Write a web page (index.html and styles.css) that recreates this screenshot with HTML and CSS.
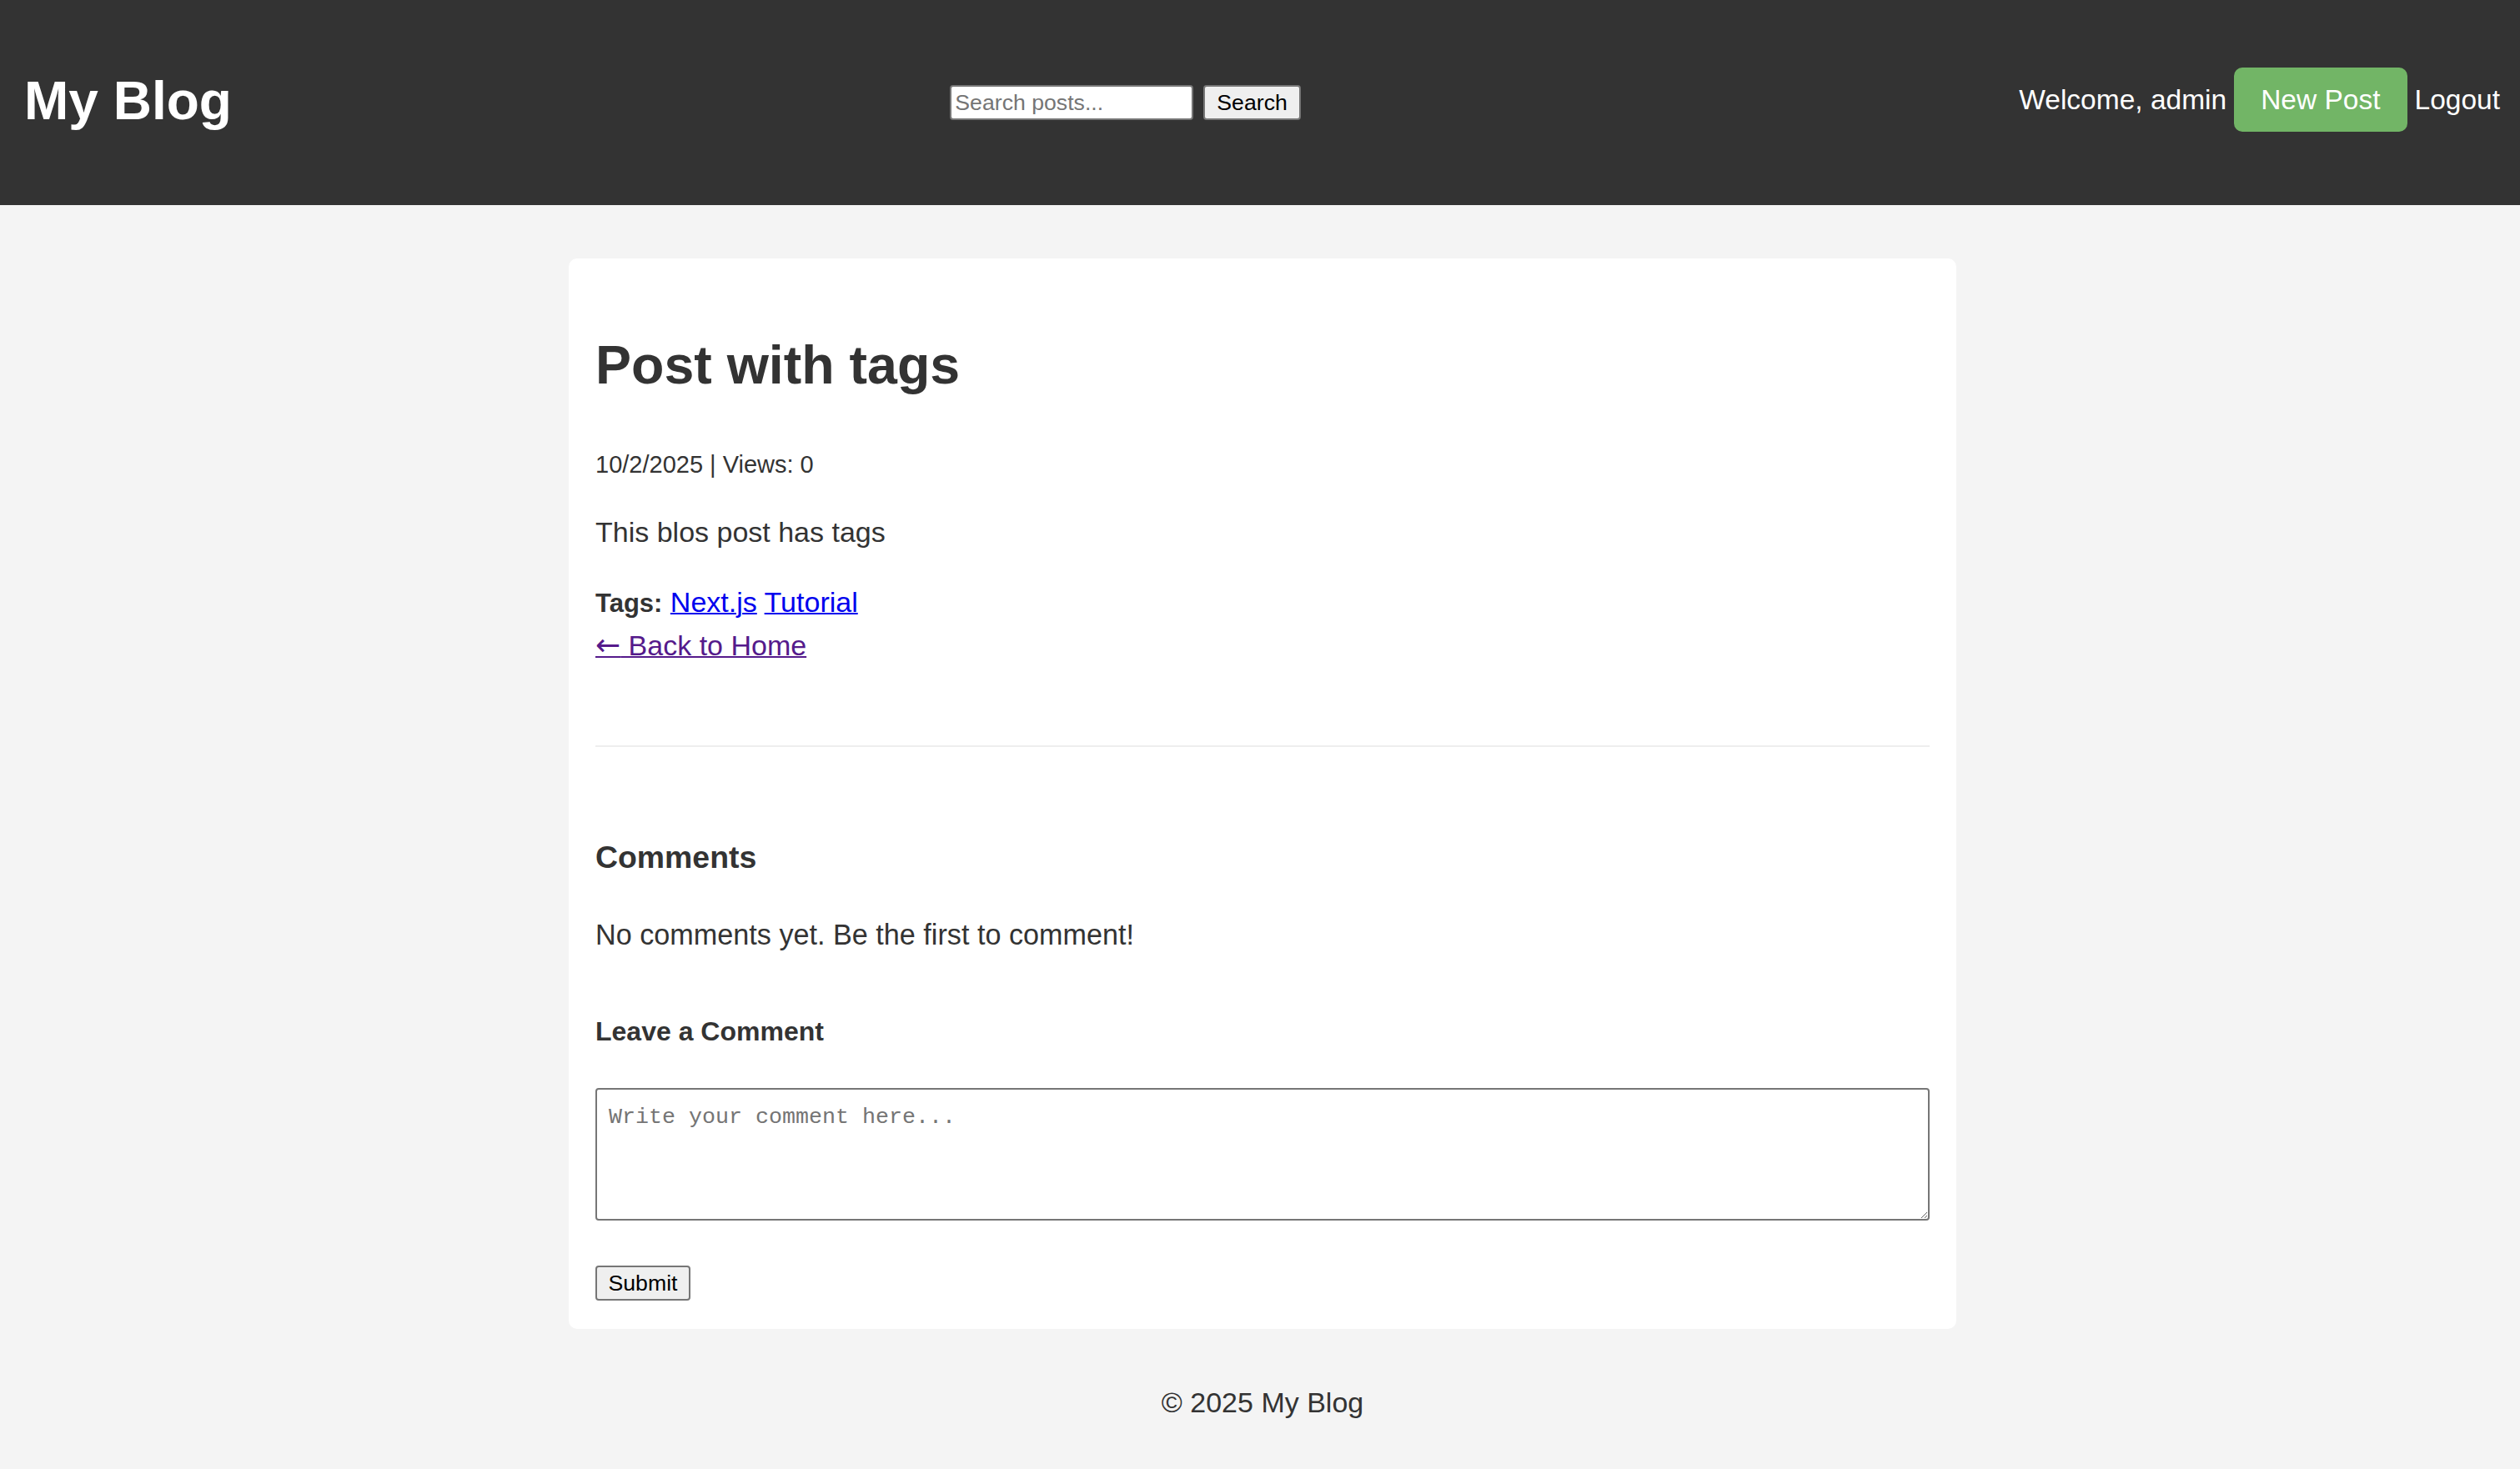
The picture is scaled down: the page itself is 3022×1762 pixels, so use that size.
FILE: index.html
```html
<!DOCTYPE html>
<html lang="en">
<head>
<meta charset="utf-8">
<title>Post with tags - My Blog</title>
<link rel="stylesheet" href="styles.css">
</head>
<body>
<header class="site-header">
  <h1 class="logo">My Blog</h1>
  <form class="search">
    <input class="search-input" type="text" placeholder="Search posts...">
    <button class="native-btn" type="button">Search</button>
  </form>
  <nav class="user-nav">
    <span class="welcome">Welcome, admin</span>
    <a class="new-post" href="#">New Post</a>
    <a class="logout" href="#">Logout</a>
  </nav>
</header>
<main class="page">
  <article class="card">
    <h1 class="post-title">Post with tags</h1>
    <p class="meta">10/2/2025 | Views: 0</p>
    <p class="content">This blos post has tags</p>
    <div class="tags"><strong class="tags-label">Tags:</strong> <a class="tag-link" href="#">Next.js</a> <a class="tag-link" href="#">Tutorial</a></div>
    <p class="back-row"><a class="back-link" href="#"><span class="arrow">←</span> Back to Home</a></p>
    <section class="comments">
      <h3 class="comments-title">Comments</h3>
      <p class="empty">No comments yet. Be the first to comment!</p>
      <h4 class="leave-title">Leave a Comment</h4>
      <form class="comment-form">
        <textarea class="comment-input" placeholder="Write your comment here..."></textarea>
        <button class="native-btn submit-btn" type="button">Submit</button>
      </form>
    </section>
  </article>
  <footer class="footer">© 2025 My Blog</footer>
</main>
</body>
</html>
```
FILE: styles.css
```css
html, body {
  margin: 0;
  padding: 0;
}

body {
  background: #f4f4f4;
  color: #333;
  font-family: "Liberation Sans", Arial, Helvetica, sans-serif;
}

/* Header */
.site-header {
  height: 246px;
  box-sizing: border-box;
  background: #333;
  color: #fff;
  display: flex;
  align-items: center;
  justify-content: space-between;
  padding: 0 24px 0 29px;
}

.logo {
  margin: -5px 0 0;
  font-size: 64px;
  line-height: 74px;
  font-weight: bold;
}

.search {
  display: flex;
  align-items: center;
  gap: 12px;
  margin: 0;
}

.search-input {
  width: 292px;
  height: 42px;
  box-sizing: border-box;
  padding: 0 4px;
  border: 2px solid #767676;
  border-radius: 4px;
  background: #fff;
  color: #000;
  font-family: "Liberation Sans", Arial, sans-serif;
  font-size: 26.67px;
  outline: none;
}

.search-input::placeholder {
  color: #757575;
}

.native-btn {
  height: 42px;
  box-sizing: border-box;
  padding: 0 14px;
  border: 2px solid #767676;
  border-radius: 4px;
  background: #efefef;
  color: #000;
  font-family: "Liberation Sans", Arial, sans-serif;
  font-size: 26.67px;
  line-height: 38px;
}

.user-nav {
  display: flex;
  align-items: center;
  gap: 9px;
  margin-top: -7px;
  font-size: 33.5px;
  line-height: 40px;
}

.welcome {
  color: #fff;
}

.new-post {
  display: block;
  background: #72b566;
  color: #fff;
  text-decoration: none;
  line-height: 77px;
  padding: 0 32px;
  border-radius: 10px;
}

.logout {
  color: #fff;
  text-decoration: none;
}

/* Main */
.page {
  padding: 64px 0 0 6px;
}

.card {
  width: 1600px;
  margin: 0 auto;
  padding: 32px 32px 34px;
  background: #fff;
  border-radius: 10px;
}

.post-title {
  margin: 59px 0 0;
  font-size: 64.5px;
  line-height: 74px;
  font-weight: bold;
}

.meta {
  margin: 65px 0 0;
  font-size: 29px;
  line-height: 34px;
}

.content {
  margin: 44px 0 0;
  font-size: 34px;
  line-height: 40px;
}

.tags {
  margin: 44px 0 0;
  font-size: 34px;
  line-height: 40px;
}

.tags-label {
  font-size: 31px;
}

.tag-link {
  color: #0000ee;
  text-decoration-thickness: 2px;
}

.back-row {
  margin: 10px 0 0;
  font-size: 34px;
  line-height: 40px;
}

.back-link {
  color: #551a8b;
  text-decoration-thickness: 2px;
}

.arrow {
  font-family: "DejaVu Sans", sans-serif;
  font-size: 36px;
  line-height: 1;
}

.comments {
  margin-top: 100px;
  padding-top: 111px;
  border-top: 2px solid #eee;
}

.comments-title {
  margin: 0;
  font-size: 37.4px;
  line-height: 43px;
  font-weight: bold;
}

.empty {
  margin: 51px 0 0;
  font-size: 34.2px;
  line-height: 40px;
}

.leave-title {
  margin: 78px 0 0;
  font-size: 32px;
  line-height: 37px;
  font-weight: bold;
}

.comment-form {
  margin: 49px 0 0;
}

.comment-input {
  display: block;
  width: 100%;
  height: 159px;
  box-sizing: border-box;
  padding: 18px 14px;
  border: 2px solid #767676;
  border-radius: 4px;
  background: #fff;
  font-family: "Liberation Mono", "DejaVu Sans Mono", monospace;
  font-size: 26.67px;
  outline: none;
}

.comment-input::placeholder {
  color: #757575;
}

.submit-btn {
  display: block;
  margin-top: 54px;
  padding: 0 13.5px;
}

.footer {
  margin-top: 68px;
  text-align: center;
  font-size: 34px;
  line-height: 40px;
  color: #333;
}
```
